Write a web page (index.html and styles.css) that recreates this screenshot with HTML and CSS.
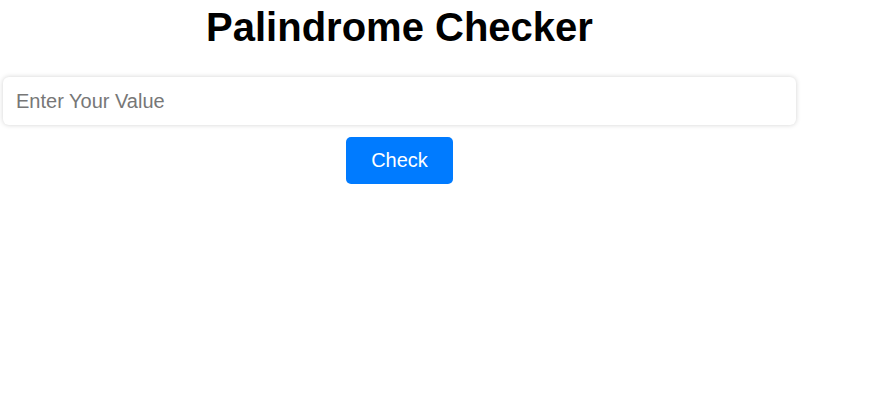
FILE: index.html
```html
<!DOCTYPE html>
<html>
<head>
<meta charset="utf-8">
<link rel="stylesheet" href="styles.css">
</head>
<body>
<div class="app">
  <h1 class="title">Palindrome Checker</h1>
  <input class="value-input" type="text" placeholder="Enter Your Value">
  <div class="actions">
    <button class="check-btn">Check</button>
  </div>
</div>
</body>
</html>
```

FILE: styles.css
```css
body {
  margin: 0;
  background: #fff;
  font-family: "Liberation Sans", Arial, sans-serif;
}
.app {
  width: 793px;
  margin-left: 3px;
  display: flex;
  flex-direction: column;
}
.title {
  margin: 5px 0 27px;
  font-size: 40px;
  font-weight: bold;
  text-align: center;
  color: #000;
  line-height: normal;
}
.value-input {
  box-sizing: border-box;
  width: 100%;
  height: 48px;
  border: none;
  border-radius: 6px;
  box-shadow: 0 0 5px rgba(0, 0, 0, 0.18);
  padding: 0 13px;
  font-family: "Liberation Sans", Arial, sans-serif;
  font-size: 20px;
  color: #333;
  outline: none;
}
.value-input::placeholder {
  color: #777;
}
.actions {
  display: flex;
  justify-content: center;
  margin-top: 12px;
}
.check-btn {
  width: 107px;
  height: 47px;
  border: none;
  border-radius: 5px;
  background: #007bff;
  color: #fff;
  font-family: "Liberation Sans", Arial, sans-serif;
  font-size: 20px;
  cursor: pointer;
}
```
